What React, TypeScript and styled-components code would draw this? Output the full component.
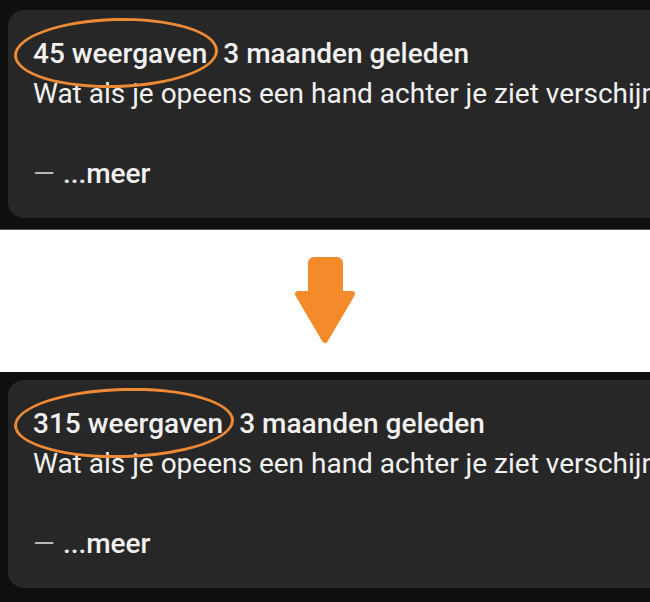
import styled, { createGlobalStyle } from "styled-components";

const GlobalStyle = createGlobalStyle`
	html, body {
		margin: 0;
		padding: 0;
		background: #ffffff;
	}
	body {
		width: 650px;
		height: 602px;
		overflow: hidden;
		font-family: Roboto, "Liberation Sans", Arial, sans-serif;
	}
`;

const Page = styled.div`
	display: flex;
	flex-direction: column;
	width: 650px;
	height: 602px;
`;

const Panel = styled.div<{ $top: number; $height: number; $edge?: boolean }>`
	height: ${({ $height }) => $height}px;
	box-sizing: border-box;
	padding: ${({ $top }) => $top}px 0 0 8px;
	background: #0f0f0f;
	overflow: hidden;
	border-bottom: ${({ $edge }) => ($edge ? "1px solid #5a5a5a" : "none")};
`;

const Card = styled.div`
	width: 760px;
	box-sizing: border-box;
	padding: 24px 25px;
	background: #272727;
	border-radius: 16px;
	color: #f1f1f1;
	font-size: 28px;
	line-height: 40px;
`;

const MetaRow = styled.div`
	display: flex;
	align-items: center;
	font-weight: 500;
	white-space: nowrap;
`;

const Views = styled.span`
	position: relative;
	display: inline-block;
	margin-right: 16px;
`;

const Circle = styled.span`
	position: absolute;
	top: -16px;
	bottom: -14px;
	left: -19px;
	right: -11px;
	border: 3px solid #ee8a35;
	border-radius: 50%;
	transform: rotate(-1.5deg);
	pointer-events: none;
`;

const Description = styled.div`
	white-space: nowrap;
	font-weight: 400;
`;

const Spacer = styled.div`
	height: 40px;
`;

const More = styled.div`
	display: flex;
	align-items: center;
	gap: 8px;
	font-weight: 500;
`;

const Dash = styled.span`
	color: #b8b8b8;
	font-weight: 400;
`;

const Divider = styled.div`
	flex: 1;
	display: flex;
	align-items: center;
	justify-content: center;
	background: #ffffff;
`;

function DownArrow() {
	return (
		<svg width="62" height="88" viewBox="0 0 62 88" aria-hidden="true">
			<g fill="#f48a2a" stroke="#f48a2a" strokeLinejoin="round" strokeWidth="6">
				<rect x="17" y="3" width="29" height="38" rx="3" />
				<polygon points="4,37 58,37 31,83" />
			</g>
		</svg>
	);
}

function DescriptionCard({ views }: { views: string }) {
	return (
		<Card>
			<MetaRow>
				<Views>
					{views} weergaven
					<Circle />
				</Views>
				<span>3 maanden geleden</span>
			</MetaRow>
			<Description>Wat als je opeens een hand achter je ziet verschijnen?</Description>
			<Spacer />
			<More>
				<Dash>—</Dash>
				<span>...meer</span>
			</More>
		</Card>
	);
}

export default function App() {
	return (
		<>
			<GlobalStyle />
			<Page>
				<Panel $top={10} $height={230} $edge>
					<DescriptionCard views="45" />
				</Panel>
				<Divider>
					<DownArrow />
				</Divider>
				<Panel $top={8} $height={230}>
					<DescriptionCard views="315" />
				</Panel>
			</Page>
		</>
	);
}
